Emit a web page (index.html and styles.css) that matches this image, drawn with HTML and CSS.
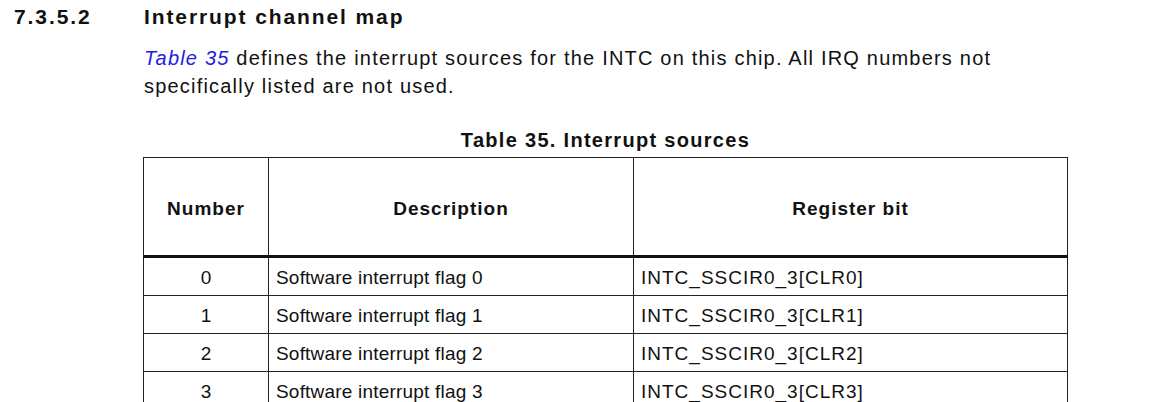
FILE: index.html
```html
<!DOCTYPE html>
<html>
<head>
<meta charset="utf-8">
<link rel="stylesheet" href="styles.css">
</head>
<body>
<div class="page">
  <div class="heading">
    <span class="num">7.3.5.2</span>
    <span class="title">Interrupt channel map</span>
  </div>
  <p class="para"><span class="link">Table 35</span> defines the interrupt sources for the INTC on this chip. All IRQ numbers not<br>specifically listed are not used.</p>
  <div class="caption">Table 35. Interrupt sources</div>
  <table class="tbl">
    <thead>
      <tr><th class="c1">Number</th><th class="c2">Description</th><th class="c3">Register bit</th></tr>
    </thead>
    <tbody>
      <tr><td class="n">0</td><td class="d">Software interrupt flag 0</td><td class="r">INTC_SSCIR0_3[CLR0]</td></tr>
      <tr><td class="n">1</td><td class="d">Software interrupt flag 1</td><td class="r">INTC_SSCIR0_3[CLR1]</td></tr>
      <tr><td class="n">2</td><td class="d">Software interrupt flag 2</td><td class="r">INTC_SSCIR0_3[CLR2]</td></tr>
      <tr><td class="n">3</td><td class="d">Software interrupt flag 3</td><td class="r">INTC_SSCIR0_3[CLR3]</td></tr>
    </tbody>
  </table>
</div>
</body>
</html>
```
FILE: styles.css
```css
html, body {
  margin: 0;
  padding: 0;
  background: #fff;
  overflow: hidden;
}
body {
  font-family: "Liberation Sans", Arial, sans-serif;
  color: #111;
}
.page {
  width: 1170px;
  height: 402px;
  padding: 4px 0 0 14px;
  box-sizing: border-box;
}
.heading {
  display: flex;
  font-weight: bold;
  font-size: 21px;
  line-height: 26px;
  letter-spacing: 1.9px;
}
.num {
  width: 130px;
}
.para {
  margin: 14px 0 0 130px;
  font-size: 20px;
  line-height: 28px;
  letter-spacing: 1.2px;
}
.link {
  color: #2020e0;
  font-style: italic;
}
.caption {
  margin: 28px 0 0 129px;
  width: 925px;
  text-align: center;
  font-weight: bold;
  font-size: 20px;
  line-height: 24px;
  letter-spacing: 1.3px;
}
.tbl {
  margin: 5px 0 0 129px;
  border-collapse: collapse;
  width: 925px;
  font-size: 19px;
}
.tbl th {
  height: 93px;
  font-weight: bold;
  border: 1px solid #222;
  border-bottom: 3px solid #111;
  padding: 4px 0 0 0;
  vertical-align: middle;
  letter-spacing: 1px;
}
.c1 { width: 124px; }
.c2 { width: 364px; }
.tbl td {
  height: 35px;
  border: 1px solid #222;
  padding: 2px 0 0 7px;
  vertical-align: middle;
}
.tbl td.n {
  text-align: center;
  padding: 2px 0 0 0;
}
.tbl td.d {
  letter-spacing: 0.2px;
}
.tbl td.r {
  letter-spacing: 1px;
}
```
